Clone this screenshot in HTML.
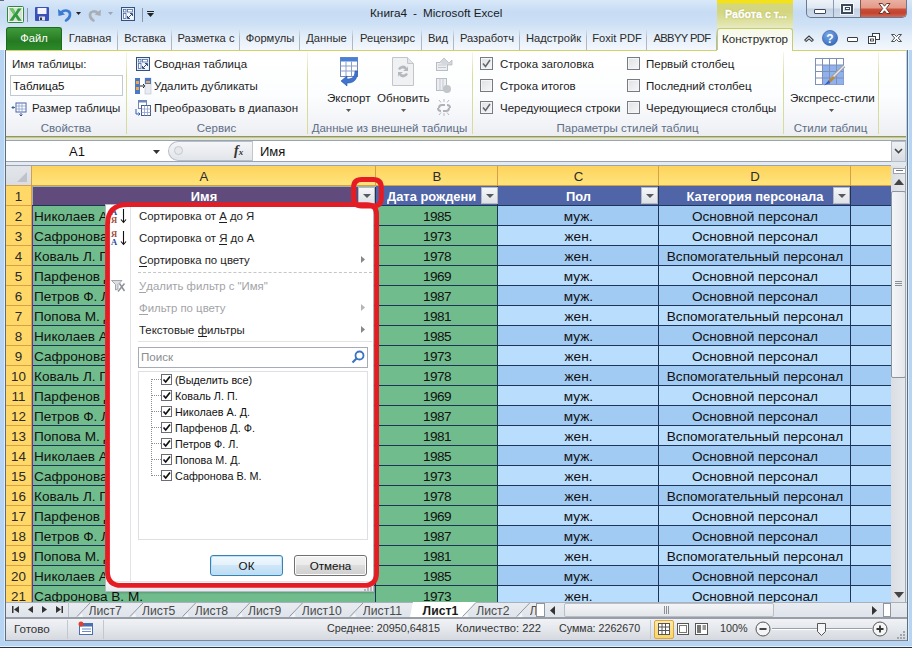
<!DOCTYPE html><html><head><meta charset="utf-8"><style>
*{margin:0;padding:0;box-sizing:border-box}
html,body{width:912px;height:648px;overflow:hidden}
body{position:relative;background:#b8d4f3;font-family:"Liberation Sans",sans-serif;font-size:12px;color:#1e1e1e}
.a{position:absolute}
.t{position:absolute;white-space:nowrap;line-height:1}
svg{position:absolute;overflow:visible}
u{text-decoration:none;border-bottom:1px solid currentColor;display:inline-block;line-height:0.95}
</style></head><body><div class="a" style="left:0px;top:0px;width:912px;height:50px;background:linear-gradient(180deg,#d8e8f8 0px,#c6dcf4 12px,#cde0f5 24px,#e2edf9 36px,#f4f8fc 50px)"></div><div class="a" style="left:0px;top:0px;width:4px;height:1px;background:#5a6a80"></div><svg style="left:7px;top:6px" width="17" height="17" viewBox="0 0 17 17"><rect x="0.5" y="0.5" width="16" height="16" rx="1" fill="#f2f5f1" stroke="#2d8a3a"/><rect x="2" y="2" width="13" height="13" fill="#d8e3d6"/><path d="M2.5 2.5h3.6l2.4 4 2.4-4h3.6l-4.2 6 4.4 6.2h-3.7l-2.5-4-2.5 4H2.3l4.4-6.2z" fill="#2e9b3c"/><path d="M2.5 2.5h3.6l2.4 4-1.8 2.2z" fill="#6cc66a"/></svg><div class="a" style="left:27px;top:8px;width:1px;height:14px;background:#8a97a8"></div><svg style="left:35px;top:7px" width="14" height="14" viewBox="0 0 14 14"><rect x="0" y="0" width="14" height="14" rx="1" fill="#3b52b8"/><rect x="2.5" y="1" width="9" height="6" fill="#f4f6fb"/><rect x="4" y="9.5" width="6" height="4" fill="#dfe3ee"/><rect x="5" y="10.5" width="2" height="2.5" fill="#333"/></svg><svg style="left:57px;top:6px" width="15" height="15" viewBox="0 0 15 15"><path d="M1 3 L1.5 10 L8 8.5 Z" fill="#3b7ad0"/><path d="M4 6.5 C8 3 13.5 4.5 13 9 C12.7 12 10.5 13.5 9 14.5" fill="none" stroke="#3b7ad0" stroke-width="2.6" stroke-linecap="round"/></svg><svg style="left:76px;top:12px" width="5" height="3" viewBox="0 0 5 3"><path d="M0 0h5l-2.5 3z" fill="#222"/></svg><svg style="left:88px;top:7px" width="14" height="14" viewBox="0 0 14 14"><path d="M13 2.5 L12.5 9 L6.5 7.5 Z" fill="#a9aeb5"/><path d="M10 6 C6.5 3 1.5 4.5 2 8.5 C2.3 11.5 4 12.5 5.5 13.5" fill="none" stroke="#a9aeb5" stroke-width="2.6" stroke-linecap="round"/></svg><svg style="left:108px;top:12px" width="5" height="3" viewBox="0 0 5 3"><path d="M0 0h5l-2.5 3z" fill="#9aa6b8"/></svg><svg style="left:121px;top:7px" width="14" height="14" viewBox="0 0 14 14"><rect x="0.5" y="0.5" width="13" height="13" fill="#dfe6f1" stroke="#34507e"/><rect x="1.5" y="1.5" width="11" height="11" fill="#f3f6fa"/><rect x="2.5" y="2.5" width="2.5" height="2.5" fill="#fff" stroke="#4a6aa8" stroke-width="0.8"/><rect x="6.5" y="2.5" width="5" height="2.5" fill="#fff" stroke="#4a6aa8" stroke-width="0.8"/><rect x="2.5" y="6.5" width="2.5" height="5" fill="#fff" stroke="#4a6aa8" stroke-width="0.8"/><path d="M7 11 L11 7" stroke="#34507e" stroke-width="1"/><path d="M6.5 9 L6.5 11.5 L9 11.5" fill="none" stroke="#34507e"/><path d="M9 6.5 L11.5 6.5 L11.5 9" fill="none" stroke="#34507e"/></svg><div class="a" style="left:142px;top:8px;width:1px;height:14px;background:#8a97a8"></div><div class="a" style="left:147px;top:11px;width:7px;height:1px;background:#222"></div><svg style="left:147px;top:13px" width="7" height="4" viewBox="0 0 7 4"><path d="M0 0h7l-3.5 4z" fill="#222"/></svg><div class="t" style="left:370px;top:8px;font-size:11.8px;color:#1b1b1b;">Книга4</div><div class="t" style="left:413px;top:8px;font-size:11.8px;color:#1b1b1b;">-</div><div class="t" style="left:423px;top:7px;font-size:11.7px;color:#1b1b1b;">Microsoft Excel</div><div class="a" style="left:717px;top:0px;width:76px;height:28px;background:linear-gradient(#f3e21a 0px,#f3e21a 3px,#d5d77e 4px,#d3d67e 12px,#dfe2a4 22px,#e8ebc0 28px)"></div><div class="t" style="left:725px;top:9px;font-size:10.7px;color:#ffffff;font-weight:bold;-webkit-text-stroke:0.3px #fff;text-shadow:0 0 2px #9a9e40">Работа с т...</div><div class="a" style="left:806px;top:0;width:101px;height:18px;border:1px solid #6a7a90;border-top:none;border-radius:0 0 5px 5px;overflow:hidden;background:linear-gradient(#eef3f9 0px,#dfe7f1 8px,#c4d2e4 9px,#cfdcec 17px)"><div class="a" style="left:26px;top:0;width:1px;height:17px;background:#8a9ab0"></div><div class="a" style="left:53px;top:0;width:1px;height:17px;background:#8a5a50"></div><div class="a" style="left:54px;top:0;width:47px;height:17px;background:linear-gradient(#eab0a2 0px,#e39a88 8px,#c9503a 9px,#c2432e 13px,#d06a55 17px)"></div></div><div class="a" style="left:814px;top:9px;width:12px;height:5px;background:#fff;border:1px solid #3c4a5c;border-radius:1px"></div><div class="a" style="left:841px;top:4px;width:12px;height:10px;background:transparent;border:2px solid #3c4a5c;box-shadow:inset 0 0 0 1px #fff, 0 0 0 1px rgba(255,255,255,0.7)"></div><div class="a" style="left:845px;top:7px;width:5px;height:3px;background:#fff;border:1px solid #3c4a5c"></div><svg style="left:878px;top:3px" width="13" height="11" viewBox="0 0 13 11"><path d="M1 0.5h3.4L6.5 3.2 8.6 0.5H12L8.3 5.5 12 10.5H8.6L6.5 7.8 4.4 10.5H1L4.7 5.5z" fill="#fff" stroke="#5a2a20" stroke-width="0.9"/></svg><div class="a" style="left:6px;top:27px;width:56px;height:23px;background:linear-gradient(#3f9c3b,#267a22 60%,#2d8b28);border:1px solid #1e6a1c;border-bottom:none;border-radius:3px 3px 0 0"></div><div class="t" style="left:6px;top:33px;width:56px;text-align:center;font-size:11.2px;color:#fff">Файл</div><div class="t" style="left:62px;top:33px;width:56px;text-align:center;font-size:11.2px;color:#2b2b2b">Главная</div><div class="a" style="left:117px;top:29px;width:1px;height:21px;background:linear-gradient(rgba(160,170,185,0),#b0b8c4 40%,#b0b8c4)"></div><div class="t" style="left:118px;top:33px;width:54px;text-align:center;font-size:11.2px;color:#2b2b2b">Вставка</div><div class="a" style="left:171px;top:29px;width:1px;height:21px;background:linear-gradient(rgba(160,170,185,0),#b0b8c4 40%,#b0b8c4)"></div><div class="t" style="left:172px;top:33px;width:68px;text-align:center;font-size:11.2px;color:#2b2b2b">Разметка с</div><div class="a" style="left:239px;top:29px;width:1px;height:21px;background:linear-gradient(rgba(160,170,185,0),#b0b8c4 40%,#b0b8c4)"></div><div class="t" style="left:240px;top:33px;width:60px;text-align:center;font-size:11.2px;color:#2b2b2b">Формулы</div><div class="a" style="left:299px;top:29px;width:1px;height:21px;background:linear-gradient(rgba(160,170,185,0),#b0b8c4 40%,#b0b8c4)"></div><div class="t" style="left:300px;top:33px;width:53px;text-align:center;font-size:11.2px;color:#2b2b2b">Данные</div><div class="a" style="left:352px;top:29px;width:1px;height:21px;background:linear-gradient(rgba(160,170,185,0),#b0b8c4 40%,#b0b8c4)"></div><div class="t" style="left:353px;top:33px;width:69px;text-align:center;font-size:11.2px;color:#2b2b2b">Рецензирс</div><div class="a" style="left:421px;top:29px;width:1px;height:21px;background:linear-gradient(rgba(160,170,185,0),#b0b8c4 40%,#b0b8c4)"></div><div class="t" style="left:422px;top:33px;width:32px;text-align:center;font-size:11.2px;color:#2b2b2b">Вид</div><div class="a" style="left:453px;top:29px;width:1px;height:21px;background:linear-gradient(rgba(160,170,185,0),#b0b8c4 40%,#b0b8c4)"></div><div class="t" style="left:454px;top:33px;width:66px;text-align:center;font-size:11.2px;color:#2b2b2b">Разработч</div><div class="a" style="left:519px;top:29px;width:1px;height:21px;background:linear-gradient(rgba(160,170,185,0),#b0b8c4 40%,#b0b8c4)"></div><div class="t" style="left:520px;top:33px;width:67px;text-align:center;font-size:11.2px;color:#2b2b2b">Надстройк</div><div class="a" style="left:586px;top:29px;width:1px;height:21px;background:linear-gradient(rgba(160,170,185,0),#b0b8c4 40%,#b0b8c4)"></div><div class="t" style="left:587px;top:33px;width:60px;text-align:center;font-size:11.2px;color:#2b2b2b">Foxit PDF</div><div class="a" style="left:646px;top:29px;width:1px;height:21px;background:linear-gradient(rgba(160,170,185,0),#b0b8c4 40%,#b0b8c4)"></div><div class="t" style="left:647px;top:33px;width:70px;text-align:center;font-size:11.2px;letter-spacing:-0.6px;color:#2b2b2b">ABBYY PDF</div><div class="a" style="left:716px;top:29px;width:1px;height:21px;background:linear-gradient(rgba(160,170,185,0),#b0b8c4 40%,#b0b8c4)"></div><div class="a" style="left:717px;top:28px;width:76px;height:23px;background:linear-gradient(#f6f8e8,#ffffff);border:1px solid #c8cc6a;border-bottom:none;border-radius:3px 3px 0 0"></div><div class="t" style="left:717px;top:33px;font-size:11.6px;color:#2b2b2b;"><div style="width:76px;text-align:center">Конструктор</div></div><svg style="left:804px;top:35px" width="10" height="7" viewBox="0 0 10 7"><path d="M0.8 5 L5 1 L9.2 5 L7.8 6.4 L5 3.8 L2.2 6.4 Z" fill="#fff" stroke="#3a3f46" stroke-width="1.1" stroke-linejoin="round"/></svg><svg style="left:822px;top:30px" width="16" height="16" viewBox="0 0 16 16"><defs><radialGradient id="hg" cx="0.4" cy="0.3" r="0.8"><stop offset="0" stop-color="#7aa8e8"/><stop offset="1" stop-color="#2f64b8"/></radialGradient></defs><circle cx="8" cy="8" r="7.6" fill="url(#hg)" stroke="#2d5aa0" stroke-width="0.6"/><text x="8" y="12.6" font-family="Liberation Sans" font-weight="bold" font-size="12" text-anchor="middle" fill="#fff">?</text></svg><div class="a" style="left:847px;top:37px;width:11px;height:5px;background:#fff;border:1px solid #3a3f46;border-radius:1px"></div><svg style="left:868px;top:33px" width="12" height="11" viewBox="0 0 12 11"><rect x="4.5" y="0.5" width="7" height="6" fill="#fff" stroke="#3a3f46"/><rect x="0.5" y="3.5" width="7" height="7" fill="#fff" stroke="#3a3f46"/><rect x="2.5" y="6" width="3" height="2" fill="none" stroke="#3a3f46" stroke-width="0.9"/></svg><svg style="left:891px;top:34px" width="11" height="8" viewBox="0 0 11 8"><path d="M0.5 0.5h3L5.5 2.6 7.5 0.5h3L7.3 4 10.5 7.5h-3L5.5 5.4 3.5 7.5h-3L3.7 4z" fill="#fff" stroke="#3a3f46" stroke-width="0.9" stroke-linejoin="round"/></svg><div class="a" style="left:6px;top:50px;width:900px;height:86px;background:linear-gradient(#ffffff 0px,#fcfdfe 45px,#f3f5f8 70px,#eceef2 86px)"></div><div class="a" style="left:6px;top:50px;width:711px;height:1px;background:#cfd36a"></div><div class="a" style="left:792px;top:50px;width:114px;height:1px;background:#cfd36a"></div><div class="a" style="left:126px;top:52px;width:1px;height:82px;background:linear-gradient(rgba(210,214,140,0.2),#d8dc9a 30%,#d8dc9a)"></div><div class="a" style="left:307px;top:52px;width:1px;height:82px;background:linear-gradient(rgba(210,214,140,0.2),#d8dc9a 30%,#d8dc9a)"></div><div class="a" style="left:472px;top:52px;width:1px;height:82px;background:linear-gradient(rgba(210,214,140,0.2),#d8dc9a 30%,#d8dc9a)"></div><div class="a" style="left:783px;top:52px;width:1px;height:82px;background:linear-gradient(rgba(210,214,140,0.2),#d8dc9a 30%,#d8dc9a)"></div><div class="a" style="left:878px;top:52px;width:1px;height:82px;background:linear-gradient(rgba(210,214,140,0.2),#d8dc9a 30%,#d8dc9a)"></div><div class="t" style="left:6px;top:123px;width:120px;text-align:center;font-size:11.5px;color:#5e6e86">Свойства</div><div class="t" style="left:126px;top:123px;width:181px;text-align:center;font-size:11.5px;color:#5e6e86">Сервис</div><div class="t" style="left:307px;top:123px;width:165px;text-align:center;font-size:11.5px;color:#5e6e86">Данные из внешней таблицы</div><div class="t" style="left:472px;top:123px;width:311px;text-align:center;font-size:11.5px;color:#5e6e86">Параметры стилей таблиц</div><div class="t" style="left:783px;top:123px;width:95px;text-align:center;font-size:11.5px;color:#5e6e86">Стили таблиц</div><div class="t" style="left:12px;top:59px;font-size:11.5px;color:#1e1e1e;">Имя таблицы:</div><div class="a" style="left:10px;top:75px;width:113px;height:21px;background:#fff;border:1px solid #c3c9d2"></div><div class="t" style="left:13px;top:81px;font-size:11.5px;color:#111;">Таблица5</div><svg style="left:12px;top:100px" width="17" height="16" viewBox="0 0 17 16"><rect x="4" y="3" width="10" height="9" fill="#fff" stroke="#4a66a8"/><path d="M4 6h10M4 9h10M7 3v9M10 3v9" stroke="#8aa0cc" stroke-width="0.8"/><path d="M0 7.5h3M1.5 6l-1.5 1.5 1.5 1.5M9 13v3M7.5 14.5l1.5 1.5 1.5-1.5" stroke="#2e4a90" fill="none" stroke-width="0.9"/></svg><div class="t" style="left:32px;top:103px;font-size:11.5px;color:#1e1e1e;">Размер таблицы</div><svg style="left:136px;top:57px" width="14" height="14" viewBox="0 0 14 14"><rect x="0.5" y="0.5" width="13" height="13" fill="#dfe6f1" stroke="#34507e"/><rect x="1.5" y="1.5" width="11" height="11" fill="#f3f6fa"/><rect x="2.5" y="2.5" width="2.5" height="2.5" fill="#fff" stroke="#4a6aa8" stroke-width="0.8"/><rect x="6.5" y="2.5" width="5" height="2.5" fill="#fff" stroke="#4a6aa8" stroke-width="0.8"/><rect x="2.5" y="6.5" width="2.5" height="5" fill="#fff" stroke="#4a6aa8" stroke-width="0.8"/><path d="M7 11 L11 7" stroke="#34507e" stroke-width="1"/><path d="M6.5 9 L6.5 11.5 L9 11.5" fill="none" stroke="#34507e"/><path d="M9 6.5 L11.5 6.5 L11.5 9" fill="none" stroke="#34507e"/></svg><div class="t" style="left:154px;top:59px;font-size:11.5px;color:#1e1e1e;">Сводная таблица</div><svg style="left:135px;top:78px" width="16" height="16" viewBox="0 0 16 16"><rect x="0" y="0" width="5" height="16" fill="#4a78c8"/><rect x="1" y="3" width="3" height="3" fill="#f2a640"/><rect x="1" y="9" width="3" height="3" fill="#f2a640"/><path d="M5 8h5M8 6l2 2-2 2" stroke="#222" fill="none"/><rect x="10" y="0" width="6" height="16" fill="#e8ecf2" stroke="#b8c0cc" stroke-width="0.6"/><rect x="10" y="0" width="6" height="6" fill="#4a78c8"/><rect x="11" y="3" width="4" height="2" fill="#f2a640"/></svg><div class="t" style="left:154px;top:81px;font-size:11.5px;color:#1e1e1e;">Удалить дубликаты</div><svg style="left:135px;top:100px" width="16" height="16" viewBox="0 0 16 16"><rect x="3.5" y="0.5" width="8" height="8" fill="#fff" stroke="#6f86b8"/><rect x="3.5" y="0.5" width="8" height="2" fill="#6f86b8"/><rect x="6.5" y="5.5" width="9" height="10" fill="#fff" stroke="#4a5e8c"/><path d="M6.5 9h9M6.5 12.5h9M9.5 5.5v10M12.5 5.5v10" stroke="#8aa0cc" stroke-width="0.8"/><path d="M1 9v5h4M3.5 12.5l1.5 1.5-1.5 1.5" stroke="#2e5bb8" fill="none"/></svg><div class="t" style="left:154px;top:103px;font-size:11.5px;color:#1e1e1e;">Преобразовать в диапазон</div><svg style="left:339px;top:57px" width="20" height="29" viewBox="0 0 20 29"><rect x="1.5" y="0.5" width="17" height="19" fill="#fff" stroke="#6f86b8"/><rect x="1.5" y="0.5" width="17" height="4" fill="#4a7fd6"/><path d="M1.5 9h17M1.5 14h17M7 4.5v15M12.5 4.5v15" stroke="#8aa0cc"/><path d="M16 14 C16 21 12 22 8 22 L8 19 L2 24 L8 29 L8 26 C14 26 18.5 24 18.5 14 Z" fill="#3f74d0" stroke="#2b56a8" stroke-width="0.6"/></svg><div class="t" style="left:327px;top:92px;font-size:11.6px;color:#1e1e1e;">Экспорт</div><svg style="left:346px;top:109px" width="5" height="3" viewBox="0 0 5 3"><path d="M0 0h5l-2.5 3z" fill="#555"/></svg><svg style="left:392px;top:57px" width="22" height="29" viewBox="0 0 22 29"><path d="M0.5 0.5h15l6 6v22h-21z" fill="#f0f1f3" stroke="#c2c6cc"/><path d="M15.5 0.5v6h6" fill="#e2e4e8" stroke="#c2c6cc"/><path d="M6 12a5 5 0 0 1 9 -1l1-2v5h-5l2-1.5a3 3 0 0 0-5 .5zM16 17a5 5 0 0 1 -9 1l-1 2v-5h5l-2 1.5a3 3 0 0 0 5-.5z" fill="#b4b8be"/></svg><div class="t" style="left:377px;top:92px;font-size:11.6px;color:#1e1e1e;">Обновить</div><svg style="left:401px;top:109px" width="5" height="3" viewBox="0 0 5 3"><path d="M0 0h5l-2.5 3z" fill="#555"/></svg><svg style="left:436px;top:57px" width="16" height="14" viewBox="0 0 16 14"><rect x="0.5" y="5.5" width="11" height="8" fill="#eceef1" stroke="#b8bcc3"/><path d="M2 8h8M2 10.5h8" stroke="#c5c9cf"/><path d="M3 6 L8 1 L13 6 L16 3 L16 8 L11 8" fill="#d4d7dc" stroke="#b0b4bb" stroke-width="0.7"/></svg><svg style="left:436px;top:78px" width="16" height="16" viewBox="0 0 16 16"><rect x="0.5" y="0.5" width="10" height="12" fill="#eceef1" stroke="#b8bcc3"/><path d="M4 0.5v12M7 0.5v12" stroke="#c5c9cf"/><circle cx="11" cy="11" r="4" fill="#c2c5ca"/></svg><svg style="left:436px;top:99px" width="16" height="17" viewBox="0 0 16 17"><path d="M3 9a3 3 0 0 1 3-3h3M13 9a3 3 0 0 1-3 3h-3M5 12a3 3 0 0 1-3-3M11 6a3 3 0 0 1 3 3" stroke="#aeb2b8" stroke-width="2" fill="none"/><path d="M8 0v3M3 1l2 2.5M13 1l-2 2.5M8 14v3M3 16l2-2.5M13 16l-2-2.5" stroke="#b8bcc2"/></svg><div class="a" style="left:480px;top:57px;width:13px;height:13px;background:linear-gradient(135deg,#dfe1e4,#f6f7f8);border:1px solid #777c83;box-shadow:inset 0 0 0 1px #f4f5f6"></div><svg style="left:482px;top:59px" width="9" height="9" viewBox="0 0 9 9"><path d="M1 4.5 L3.5 7.5 L8 1" fill="none" stroke="#62676e" stroke-width="1.5"/></svg><div class="a" style="left:480px;top:79px;width:13px;height:13px;background:linear-gradient(135deg,#dfe1e4,#f6f7f8);border:1px solid #777c83;box-shadow:inset 0 0 0 1px #f4f5f6"></div><div class="a" style="left:480px;top:101px;width:13px;height:13px;background:linear-gradient(135deg,#dfe1e4,#f6f7f8);border:1px solid #777c83;box-shadow:inset 0 0 0 1px #f4f5f6"></div><svg style="left:482px;top:103px" width="9" height="9" viewBox="0 0 9 9"><path d="M1 4.5 L3.5 7.5 L8 1" fill="none" stroke="#62676e" stroke-width="1.5"/></svg><div class="a" style="left:627px;top:57px;width:13px;height:13px;background:linear-gradient(135deg,#dfe1e4,#f6f7f8);border:1px solid #777c83;box-shadow:inset 0 0 0 1px #f4f5f6"></div><div class="a" style="left:627px;top:79px;width:13px;height:13px;background:linear-gradient(135deg,#dfe1e4,#f6f7f8);border:1px solid #777c83;box-shadow:inset 0 0 0 1px #f4f5f6"></div><div class="a" style="left:627px;top:101px;width:13px;height:13px;background:linear-gradient(135deg,#dfe1e4,#f6f7f8);border:1px solid #777c83;box-shadow:inset 0 0 0 1px #f4f5f6"></div><div class="t" style="left:500px;top:59px;font-size:11.5px;color:#1e1e1e;">Строка заголовка</div><div class="t" style="left:500px;top:81px;font-size:11.5px;color:#1e1e1e;">Строка итогов</div><div class="t" style="left:500px;top:103px;font-size:11.5px;color:#1e1e1e;">Чередующиеся строки</div><div class="t" style="left:646px;top:59px;font-size:11.5px;color:#1e1e1e;">Первый столбец</div><div class="t" style="left:646px;top:81px;font-size:11.5px;color:#1e1e1e;">Последний столбец</div><div class="t" style="left:646px;top:103px;font-size:11.5px;color:#1e1e1e;">Чередующиеся столбцы</div><svg style="left:815px;top:58px" width="30" height="28" viewBox="0 0 30 28"><g stroke="#7c8fb6" stroke-width="1"><rect x="0.5" y="0.5" width="28" height="26" fill="#fff"/></g><rect x="7.5" y="7" width="21" height="19.5" fill="#8fb1ee"/><path d="M0.5 7h28M0.5 13.5h28M0.5 20h28M7.5 0.5v26M14.5 0.5v26M21.5 0.5v26" stroke="#7c8fb6"/><path d="M29 8 L17 20" stroke="#9aa0a8" stroke-width="3.5"/><path d="M29 8 L17 20" stroke="#e6e8ec" stroke-width="1.5"/><path d="M18 18 L14 22 L11 27 L16 24 L20 20z" fill="#b88a40"/><path d="M14 22 L9 27.5 L15 25z" fill="#2f5fd0"/></svg><div class="t" style="left:790px;top:92px;font-size:11.6px;color:#1e1e1e;">Экспресс-стили</div><svg style="left:829px;top:109px" width="5" height="3" viewBox="0 0 5 3"><path d="M0 0h5l-2.5 3z" fill="#555"/></svg><div class="a" style="left:6px;top:136px;width:900px;height:30px;background:#e3e8ef"></div><div class="a" style="left:6px;top:136px;width:900px;height:1px;background:#8e947c"></div><div class="a" style="left:6px;top:137px;width:900px;height:1px;background:#c9c97c"></div><div class="a" style="left:6px;top:138px;width:900px;height:2px;background:#e3e6cf"></div><div class="a" style="left:6px;top:140px;width:900px;height:1px;background:#9aa3b0"></div><div class="a" style="left:6px;top:141px;width:900px;height:20px;background:#fff"></div><div class="a" style="left:6px;top:161px;width:900px;height:1px;background:#9aa3b0"></div><div class="a" style="left:6px;top:162px;width:885px;height:3px;background:#e6ebf3"></div><div class="a" style="left:6px;top:165px;width:885px;height:1px;background:#9aa3b0"></div><div class="t" style="left:6px;top:145px;font-size:13px;color:#111;"><div style="width:142px;text-align:center">A1</div></div><svg style="left:153px;top:150px" width="7" height="4" viewBox="0 0 7 4"><path d="M0 0h7l-3.5 4z" fill="#333"/></svg><div class="a" style="left:168px;top:141px;width:84px;height:20px;border-radius:10px 0 0 10px;background:linear-gradient(#f4f5f7,#e2e5ea);border:1px solid #b8bec8;border-right:none"></div><svg style="left:174px;top:146px" width="9" height="9" viewBox="0 0 9 9"><circle cx="4.5" cy="4.5" r="4" fill="#e6e8ec" stroke="#c4c8ce"/></svg><div class="t" style="left:234px;top:143px;font-size:14px;color:#333;"><i style="font-family:Liberation Serif;font-weight:bold">f</i><span style="font-size:9px;font-family:Liberation Serif;font-style:italic;font-weight:bold">x</span></div><div class="a" style="left:252px;top:141px;width:1px;height:20px;background:#c0c6cf"></div><div class="t" style="left:260px;top:145px;font-size:13px;color:#111;">Имя</div><div class="a" style="left:891px;top:141px;width:15px;height:21px;background:linear-gradient(#eef0f3,#d9dde3);border:1px solid #b5bcc6"></div><svg style="left:894px;top:148px" width="9" height="6" viewBox="0 0 9 6"><path d="M1 1 L4.5 4.5 L8 1" fill="none" stroke="#444" stroke-width="1.6"/></svg><div class="a" style="left:6px;top:166px;width:885px;height:20px;background:linear-gradient(#fdd35c,#ffe57e)"></div><div class="a" style="left:6px;top:166px;width:25px;height:20px;background:linear-gradient(#e2e5e9,#d9dde3)"></div><svg style="left:17px;top:172px" width="10" height="10" viewBox="0 0 10 10"><path d="M10 0 L10 10 L0 10z" fill="#bfc3c9"/></svg><div class="a" style="left:31px;top:166px;width:1px;height:20px;background:#d6a046"></div><div class="a" style="left:375px;top:166px;width:1px;height:20px;background:#d6a046"></div><div class="t" style="left:32px;top:170px;width:344px;text-align:center;font-size:13.2px;color:#2a2a2a">A</div><div class="a" style="left:497px;top:166px;width:1px;height:20px;background:#d6a046"></div><div class="t" style="left:376px;top:170px;width:122px;text-align:center;font-size:13.2px;color:#2a2a2a">B</div><div class="a" style="left:658px;top:166px;width:1px;height:20px;background:#d6a046"></div><div class="t" style="left:498px;top:170px;width:161px;text-align:center;font-size:13.2px;color:#2a2a2a">C</div><div class="a" style="left:850px;top:166px;width:1px;height:20px;background:#d6a046"></div><div class="t" style="left:659px;top:170px;width:192px;text-align:center;font-size:13.2px;color:#2a2a2a">D</div><div class="a" style="left:6px;top:185px;width:885px;height:1px;background:#d6a046"></div><div class="a" style="left:6px;top:186px;width:26px;height:20px;background:#ffd868;border-bottom:1px solid #d6a046;border-right:1px solid #d6a046"></div><div class="t" style="left:6px;top:190px;width:25px;text-align:center;font-size:13.4px;color:#2a2a2a">1</div><div class="a" style="left:32px;top:186px;width:344px;height:20px;background:#614a7c"></div><div class="a" style="left:376px;top:186px;width:515px;height:20px;background:#5065a8"></div><div class="t" style="left:32px;top:191px;width:344px;text-align:center;font-size:12.9px;font-weight:bold;color:#fff">Имя</div><div class="t" style="left:387px;top:191px;width:94px;overflow:hidden;font-size:12.9px;font-weight:bold;color:#fff">Дата рождени</div><div class="t" style="left:498px;top:191px;width:161px;text-align:center;font-size:12.9px;font-weight:bold;color:#fff">Пол</div><div class="t" style="left:659px;top:191px;width:192px;text-align:center;font-size:12.9px;font-weight:bold;color:#fff">Категория персонала</div><div class="a" style="left:32px;top:205px;width:859px;height:1px;background:#1b3458"></div><div class="a" style="left:6px;top:206px;width:26px;height:20px;background:#ffd868;border-bottom:1px solid #d6a046;border-right:1px solid #d6a046"></div><div class="t" style="left:6px;top:210px;width:25px;text-align:center;font-size:13.4px;color:#2a2a2a">2</div><div class="a" style="left:32px;top:206px;width:466px;height:20px;background:#71bc8d"></div><div class="a" style="left:498px;top:206px;width:393px;height:20px;background:#a1cbf3"></div><div class="t" style="left:34px;top:210px;font-size:13.6px;color:#111">Николаев А. Д.</div><div class="t" style="left:376px;top:210px;width:122px;text-align:center;font-size:13.6px;letter-spacing:-0.5px;color:#111">1985</div><div class="t" style="left:498px;top:210px;width:161px;text-align:center;font-size:13.6px;color:#111">муж.</div><div class="t" style="left:659px;top:210px;width:192px;text-align:center;font-size:13.6px;color:#111">Основной персонал</div><div class="a" style="left:32px;top:225px;width:859px;height:1px;background:#1b3458"></div><div class="a" style="left:6px;top:226px;width:26px;height:20px;background:#ffd868;border-bottom:1px solid #d6a046;border-right:1px solid #d6a046"></div><div class="t" style="left:6px;top:230px;width:25px;text-align:center;font-size:13.4px;color:#2a2a2a">3</div><div class="a" style="left:32px;top:226px;width:466px;height:20px;background:#71bc8d"></div><div class="a" style="left:498px;top:226px;width:393px;height:20px;background:#b8ddfd"></div><div class="t" style="left:34px;top:230px;font-size:13.6px;color:#111">Сафронова В. М.</div><div class="t" style="left:376px;top:230px;width:122px;text-align:center;font-size:13.6px;letter-spacing:-0.5px;color:#111">1973</div><div class="t" style="left:498px;top:230px;width:161px;text-align:center;font-size:13.6px;color:#111">жен.</div><div class="t" style="left:659px;top:230px;width:192px;text-align:center;font-size:13.6px;color:#111">Основной персонал</div><div class="a" style="left:32px;top:245px;width:859px;height:1px;background:#1b3458"></div><div class="a" style="left:6px;top:246px;width:26px;height:20px;background:#ffd868;border-bottom:1px solid #d6a046;border-right:1px solid #d6a046"></div><div class="t" style="left:6px;top:250px;width:25px;text-align:center;font-size:13.4px;color:#2a2a2a">4</div><div class="a" style="left:32px;top:246px;width:466px;height:20px;background:#71bc8d"></div><div class="a" style="left:498px;top:246px;width:393px;height:20px;background:#a1cbf3"></div><div class="t" style="left:34px;top:250px;font-size:13.6px;color:#111">Коваль Л. П.</div><div class="t" style="left:376px;top:250px;width:122px;text-align:center;font-size:13.6px;letter-spacing:-0.5px;color:#111">1978</div><div class="t" style="left:498px;top:250px;width:161px;text-align:center;font-size:13.6px;color:#111">жен.</div><div class="t" style="left:659px;top:250px;width:192px;text-align:center;font-size:13.6px;color:#111">Вспомогательный персонал</div><div class="a" style="left:32px;top:265px;width:859px;height:1px;background:#1b3458"></div><div class="a" style="left:6px;top:266px;width:26px;height:20px;background:#ffd868;border-bottom:1px solid #d6a046;border-right:1px solid #d6a046"></div><div class="t" style="left:6px;top:270px;width:25px;text-align:center;font-size:13.4px;color:#2a2a2a">5</div><div class="a" style="left:32px;top:266px;width:466px;height:20px;background:#71bc8d"></div><div class="a" style="left:498px;top:266px;width:393px;height:20px;background:#b8ddfd"></div><div class="t" style="left:34px;top:270px;font-size:13.6px;color:#111">Парфенов Д. Ф.</div><div class="t" style="left:376px;top:270px;width:122px;text-align:center;font-size:13.6px;letter-spacing:-0.5px;color:#111">1969</div><div class="t" style="left:498px;top:270px;width:161px;text-align:center;font-size:13.6px;color:#111">муж.</div><div class="t" style="left:659px;top:270px;width:192px;text-align:center;font-size:13.6px;color:#111">Основной персонал</div><div class="a" style="left:32px;top:285px;width:859px;height:1px;background:#1b3458"></div><div class="a" style="left:6px;top:286px;width:26px;height:20px;background:#ffd868;border-bottom:1px solid #d6a046;border-right:1px solid #d6a046"></div><div class="t" style="left:6px;top:290px;width:25px;text-align:center;font-size:13.4px;color:#2a2a2a">6</div><div class="a" style="left:32px;top:286px;width:466px;height:20px;background:#71bc8d"></div><div class="a" style="left:498px;top:286px;width:393px;height:20px;background:#a1cbf3"></div><div class="t" style="left:34px;top:290px;font-size:13.6px;color:#111">Петров Ф. Л.</div><div class="t" style="left:376px;top:290px;width:122px;text-align:center;font-size:13.6px;letter-spacing:-0.5px;color:#111">1987</div><div class="t" style="left:498px;top:290px;width:161px;text-align:center;font-size:13.6px;color:#111">муж.</div><div class="t" style="left:659px;top:290px;width:192px;text-align:center;font-size:13.6px;color:#111">Основной персонал</div><div class="a" style="left:32px;top:305px;width:859px;height:1px;background:#1b3458"></div><div class="a" style="left:6px;top:306px;width:26px;height:20px;background:#ffd868;border-bottom:1px solid #d6a046;border-right:1px solid #d6a046"></div><div class="t" style="left:6px;top:310px;width:25px;text-align:center;font-size:13.4px;color:#2a2a2a">7</div><div class="a" style="left:32px;top:306px;width:466px;height:20px;background:#71bc8d"></div><div class="a" style="left:498px;top:306px;width:393px;height:20px;background:#b8ddfd"></div><div class="t" style="left:34px;top:310px;font-size:13.6px;color:#111">Попова М. Д.</div><div class="t" style="left:376px;top:310px;width:122px;text-align:center;font-size:13.6px;letter-spacing:-0.5px;color:#111">1981</div><div class="t" style="left:498px;top:310px;width:161px;text-align:center;font-size:13.6px;color:#111">жен.</div><div class="t" style="left:659px;top:310px;width:192px;text-align:center;font-size:13.6px;color:#111">Вспомогательный персонал</div><div class="a" style="left:32px;top:325px;width:859px;height:1px;background:#1b3458"></div><div class="a" style="left:6px;top:326px;width:26px;height:20px;background:#ffd868;border-bottom:1px solid #d6a046;border-right:1px solid #d6a046"></div><div class="t" style="left:6px;top:330px;width:25px;text-align:center;font-size:13.4px;color:#2a2a2a">8</div><div class="a" style="left:32px;top:326px;width:466px;height:20px;background:#71bc8d"></div><div class="a" style="left:498px;top:326px;width:393px;height:20px;background:#a1cbf3"></div><div class="t" style="left:34px;top:330px;font-size:13.6px;color:#111">Николаев А. Д.</div><div class="t" style="left:376px;top:330px;width:122px;text-align:center;font-size:13.6px;letter-spacing:-0.5px;color:#111">1985</div><div class="t" style="left:498px;top:330px;width:161px;text-align:center;font-size:13.6px;color:#111">муж.</div><div class="t" style="left:659px;top:330px;width:192px;text-align:center;font-size:13.6px;color:#111">Основной персонал</div><div class="a" style="left:32px;top:345px;width:859px;height:1px;background:#1b3458"></div><div class="a" style="left:6px;top:346px;width:26px;height:20px;background:#ffd868;border-bottom:1px solid #d6a046;border-right:1px solid #d6a046"></div><div class="t" style="left:6px;top:350px;width:25px;text-align:center;font-size:13.4px;color:#2a2a2a">9</div><div class="a" style="left:32px;top:346px;width:466px;height:20px;background:#71bc8d"></div><div class="a" style="left:498px;top:346px;width:393px;height:20px;background:#b8ddfd"></div><div class="t" style="left:34px;top:350px;font-size:13.6px;color:#111">Сафронова В. М.</div><div class="t" style="left:376px;top:350px;width:122px;text-align:center;font-size:13.6px;letter-spacing:-0.5px;color:#111">1973</div><div class="t" style="left:498px;top:350px;width:161px;text-align:center;font-size:13.6px;color:#111">жен.</div><div class="t" style="left:659px;top:350px;width:192px;text-align:center;font-size:13.6px;color:#111">Основной персонал</div><div class="a" style="left:32px;top:365px;width:859px;height:1px;background:#1b3458"></div><div class="a" style="left:6px;top:366px;width:26px;height:20px;background:#ffd868;border-bottom:1px solid #d6a046;border-right:1px solid #d6a046"></div><div class="t" style="left:6px;top:370px;width:25px;text-align:center;font-size:13.4px;color:#2a2a2a">10</div><div class="a" style="left:32px;top:366px;width:466px;height:20px;background:#71bc8d"></div><div class="a" style="left:498px;top:366px;width:393px;height:20px;background:#a1cbf3"></div><div class="t" style="left:34px;top:370px;font-size:13.6px;color:#111">Коваль Л. П.</div><div class="t" style="left:376px;top:370px;width:122px;text-align:center;font-size:13.6px;letter-spacing:-0.5px;color:#111">1978</div><div class="t" style="left:498px;top:370px;width:161px;text-align:center;font-size:13.6px;color:#111">жен.</div><div class="t" style="left:659px;top:370px;width:192px;text-align:center;font-size:13.6px;color:#111">Вспомогательный персонал</div><div class="a" style="left:32px;top:385px;width:859px;height:1px;background:#1b3458"></div><div class="a" style="left:6px;top:386px;width:26px;height:20px;background:#ffd868;border-bottom:1px solid #d6a046;border-right:1px solid #d6a046"></div><div class="t" style="left:6px;top:390px;width:25px;text-align:center;font-size:13.4px;color:#2a2a2a">11</div><div class="a" style="left:32px;top:386px;width:466px;height:20px;background:#71bc8d"></div><div class="a" style="left:498px;top:386px;width:393px;height:20px;background:#b8ddfd"></div><div class="t" style="left:34px;top:390px;font-size:13.6px;color:#111">Парфенов Д. Ф.</div><div class="t" style="left:376px;top:390px;width:122px;text-align:center;font-size:13.6px;letter-spacing:-0.5px;color:#111">1969</div><div class="t" style="left:498px;top:390px;width:161px;text-align:center;font-size:13.6px;color:#111">муж.</div><div class="t" style="left:659px;top:390px;width:192px;text-align:center;font-size:13.6px;color:#111">Основной персонал</div><div class="a" style="left:32px;top:405px;width:859px;height:1px;background:#1b3458"></div><div class="a" style="left:6px;top:406px;width:26px;height:20px;background:#ffd868;border-bottom:1px solid #d6a046;border-right:1px solid #d6a046"></div><div class="t" style="left:6px;top:410px;width:25px;text-align:center;font-size:13.4px;color:#2a2a2a">12</div><div class="a" style="left:32px;top:406px;width:466px;height:20px;background:#71bc8d"></div><div class="a" style="left:498px;top:406px;width:393px;height:20px;background:#a1cbf3"></div><div class="t" style="left:34px;top:410px;font-size:13.6px;color:#111">Петров Ф. Л.</div><div class="t" style="left:376px;top:410px;width:122px;text-align:center;font-size:13.6px;letter-spacing:-0.5px;color:#111">1987</div><div class="t" style="left:498px;top:410px;width:161px;text-align:center;font-size:13.6px;color:#111">муж.</div><div class="t" style="left:659px;top:410px;width:192px;text-align:center;font-size:13.6px;color:#111">Основной персонал</div><div class="a" style="left:32px;top:425px;width:859px;height:1px;background:#1b3458"></div><div class="a" style="left:6px;top:426px;width:26px;height:20px;background:#ffd868;border-bottom:1px solid #d6a046;border-right:1px solid #d6a046"></div><div class="t" style="left:6px;top:430px;width:25px;text-align:center;font-size:13.4px;color:#2a2a2a">13</div><div class="a" style="left:32px;top:426px;width:466px;height:20px;background:#71bc8d"></div><div class="a" style="left:498px;top:426px;width:393px;height:20px;background:#b8ddfd"></div><div class="t" style="left:34px;top:430px;font-size:13.6px;color:#111">Попова М. Д.</div><div class="t" style="left:376px;top:430px;width:122px;text-align:center;font-size:13.6px;letter-spacing:-0.5px;color:#111">1981</div><div class="t" style="left:498px;top:430px;width:161px;text-align:center;font-size:13.6px;color:#111">жен.</div><div class="t" style="left:659px;top:430px;width:192px;text-align:center;font-size:13.6px;color:#111">Вспомогательный персонал</div><div class="a" style="left:32px;top:445px;width:859px;height:1px;background:#1b3458"></div><div class="a" style="left:6px;top:446px;width:26px;height:20px;background:#ffd868;border-bottom:1px solid #d6a046;border-right:1px solid #d6a046"></div><div class="t" style="left:6px;top:450px;width:25px;text-align:center;font-size:13.4px;color:#2a2a2a">14</div><div class="a" style="left:32px;top:446px;width:466px;height:20px;background:#71bc8d"></div><div class="a" style="left:498px;top:446px;width:393px;height:20px;background:#a1cbf3"></div><div class="t" style="left:34px;top:450px;font-size:13.6px;color:#111">Николаев А. Д.</div><div class="t" style="left:376px;top:450px;width:122px;text-align:center;font-size:13.6px;letter-spacing:-0.5px;color:#111">1985</div><div class="t" style="left:498px;top:450px;width:161px;text-align:center;font-size:13.6px;color:#111">муж.</div><div class="t" style="left:659px;top:450px;width:192px;text-align:center;font-size:13.6px;color:#111">Основной персонал</div><div class="a" style="left:32px;top:465px;width:859px;height:1px;background:#1b3458"></div><div class="a" style="left:6px;top:466px;width:26px;height:20px;background:#ffd868;border-bottom:1px solid #d6a046;border-right:1px solid #d6a046"></div><div class="t" style="left:6px;top:470px;width:25px;text-align:center;font-size:13.4px;color:#2a2a2a">15</div><div class="a" style="left:32px;top:466px;width:466px;height:20px;background:#71bc8d"></div><div class="a" style="left:498px;top:466px;width:393px;height:20px;background:#b8ddfd"></div><div class="t" style="left:34px;top:470px;font-size:13.6px;color:#111">Сафронова В. М.</div><div class="t" style="left:376px;top:470px;width:122px;text-align:center;font-size:13.6px;letter-spacing:-0.5px;color:#111">1973</div><div class="t" style="left:498px;top:470px;width:161px;text-align:center;font-size:13.6px;color:#111">жен.</div><div class="t" style="left:659px;top:470px;width:192px;text-align:center;font-size:13.6px;color:#111">Основной персонал</div><div class="a" style="left:32px;top:485px;width:859px;height:1px;background:#1b3458"></div><div class="a" style="left:6px;top:486px;width:26px;height:20px;background:#ffd868;border-bottom:1px solid #d6a046;border-right:1px solid #d6a046"></div><div class="t" style="left:6px;top:490px;width:25px;text-align:center;font-size:13.4px;color:#2a2a2a">16</div><div class="a" style="left:32px;top:486px;width:466px;height:20px;background:#71bc8d"></div><div class="a" style="left:498px;top:486px;width:393px;height:20px;background:#a1cbf3"></div><div class="t" style="left:34px;top:490px;font-size:13.6px;color:#111">Коваль Л. П.</div><div class="t" style="left:376px;top:490px;width:122px;text-align:center;font-size:13.6px;letter-spacing:-0.5px;color:#111">1978</div><div class="t" style="left:498px;top:490px;width:161px;text-align:center;font-size:13.6px;color:#111">жен.</div><div class="t" style="left:659px;top:490px;width:192px;text-align:center;font-size:13.6px;color:#111">Вспомогательный персонал</div><div class="a" style="left:32px;top:505px;width:859px;height:1px;background:#1b3458"></div><div class="a" style="left:6px;top:506px;width:26px;height:20px;background:#ffd868;border-bottom:1px solid #d6a046;border-right:1px solid #d6a046"></div><div class="t" style="left:6px;top:510px;width:25px;text-align:center;font-size:13.4px;color:#2a2a2a">17</div><div class="a" style="left:32px;top:506px;width:466px;height:20px;background:#71bc8d"></div><div class="a" style="left:498px;top:506px;width:393px;height:20px;background:#b8ddfd"></div><div class="t" style="left:34px;top:510px;font-size:13.6px;color:#111">Парфенов Д. Ф.</div><div class="t" style="left:376px;top:510px;width:122px;text-align:center;font-size:13.6px;letter-spacing:-0.5px;color:#111">1969</div><div class="t" style="left:498px;top:510px;width:161px;text-align:center;font-size:13.6px;color:#111">муж.</div><div class="t" style="left:659px;top:510px;width:192px;text-align:center;font-size:13.6px;color:#111">Основной персонал</div><div class="a" style="left:32px;top:525px;width:859px;height:1px;background:#1b3458"></div><div class="a" style="left:6px;top:526px;width:26px;height:20px;background:#ffd868;border-bottom:1px solid #d6a046;border-right:1px solid #d6a046"></div><div class="t" style="left:6px;top:530px;width:25px;text-align:center;font-size:13.4px;color:#2a2a2a">18</div><div class="a" style="left:32px;top:526px;width:466px;height:20px;background:#71bc8d"></div><div class="a" style="left:498px;top:526px;width:393px;height:20px;background:#a1cbf3"></div><div class="t" style="left:34px;top:530px;font-size:13.6px;color:#111">Петров Ф. Л.</div><div class="t" style="left:376px;top:530px;width:122px;text-align:center;font-size:13.6px;letter-spacing:-0.5px;color:#111">1987</div><div class="t" style="left:498px;top:530px;width:161px;text-align:center;font-size:13.6px;color:#111">муж.</div><div class="t" style="left:659px;top:530px;width:192px;text-align:center;font-size:13.6px;color:#111">Основной персонал</div><div class="a" style="left:32px;top:545px;width:859px;height:1px;background:#1b3458"></div><div class="a" style="left:6px;top:546px;width:26px;height:20px;background:#ffd868;border-bottom:1px solid #d6a046;border-right:1px solid #d6a046"></div><div class="t" style="left:6px;top:550px;width:25px;text-align:center;font-size:13.4px;color:#2a2a2a">19</div><div class="a" style="left:32px;top:546px;width:466px;height:20px;background:#71bc8d"></div><div class="a" style="left:498px;top:546px;width:393px;height:20px;background:#b8ddfd"></div><div class="t" style="left:34px;top:550px;font-size:13.6px;color:#111">Попова М. Д.</div><div class="t" style="left:376px;top:550px;width:122px;text-align:center;font-size:13.6px;letter-spacing:-0.5px;color:#111">1981</div><div class="t" style="left:498px;top:550px;width:161px;text-align:center;font-size:13.6px;color:#111">жен.</div><div class="t" style="left:659px;top:550px;width:192px;text-align:center;font-size:13.6px;color:#111">Вспомогательный персонал</div><div class="a" style="left:32px;top:565px;width:859px;height:1px;background:#1b3458"></div><div class="a" style="left:6px;top:566px;width:26px;height:20px;background:#ffd868;border-bottom:1px solid #d6a046;border-right:1px solid #d6a046"></div><div class="t" style="left:6px;top:570px;width:25px;text-align:center;font-size:13.4px;color:#2a2a2a">20</div><div class="a" style="left:32px;top:566px;width:466px;height:20px;background:#71bc8d"></div><div class="a" style="left:498px;top:566px;width:393px;height:20px;background:#a1cbf3"></div><div class="t" style="left:34px;top:570px;font-size:13.6px;color:#111">Николаев А. Д.</div><div class="t" style="left:376px;top:570px;width:122px;text-align:center;font-size:13.6px;letter-spacing:-0.5px;color:#111">1985</div><div class="t" style="left:498px;top:570px;width:161px;text-align:center;font-size:13.6px;color:#111">муж.</div><div class="t" style="left:659px;top:570px;width:192px;text-align:center;font-size:13.6px;color:#111">Основной персонал</div><div class="a" style="left:32px;top:585px;width:859px;height:1px;background:#1b3458"></div><div class="a" style="left:6px;top:586px;width:26px;height:20px;background:#ffd868;border-bottom:1px solid #d6a046;border-right:1px solid #d6a046"></div><div class="t" style="left:6px;top:590px;width:25px;text-align:center;font-size:13.4px;color:#2a2a2a">21</div><div class="a" style="left:32px;top:586px;width:466px;height:20px;background:#71bc8d"></div><div class="a" style="left:498px;top:586px;width:393px;height:20px;background:#b8ddfd"></div><div class="t" style="left:34px;top:590px;font-size:13.6px;color:#111">Сафронова В. М.</div><div class="t" style="left:376px;top:590px;width:122px;text-align:center;font-size:13.6px;letter-spacing:-0.5px;color:#111">1973</div><div class="t" style="left:498px;top:590px;width:161px;text-align:center;font-size:13.6px;color:#111">жен.</div><div class="t" style="left:659px;top:590px;width:192px;text-align:center;font-size:13.6px;color:#111">Основной персонал</div><div class="a" style="left:32px;top:605px;width:859px;height:1px;background:#1b3458"></div><div class="a" style="left:375px;top:186px;width:1px;height:416px;background:#1b3458"></div><div class="a" style="left:497px;top:186px;width:1px;height:416px;background:#1b3458"></div><div class="a" style="left:658px;top:186px;width:1px;height:416px;background:#1b3458"></div><div class="a" style="left:850px;top:186px;width:1px;height:416px;background:#1b3458"></div><div class="a" style="left:358px;top:187px;width:17px;height:17px;background:linear-gradient(#f5f6f8,#dee1e6);border:1px solid #b4b8c0"></div><svg style="left:362.5px;top:194px" width="8" height="4" viewBox="0 0 8 4"><path d="M0 0h8l-4 4z" fill="#555a60"/></svg><div class="a" style="left:481px;top:187px;width:17px;height:17px;background:linear-gradient(#f5f6f8,#dee1e6);border:1px solid #b4b8c0"></div><svg style="left:485.5px;top:194px" width="8" height="4" viewBox="0 0 8 4"><path d="M0 0h8l-4 4z" fill="#555a60"/></svg><div class="a" style="left:641px;top:187px;width:17px;height:17px;background:linear-gradient(#f5f6f8,#dee1e6);border:1px solid #b4b8c0"></div><svg style="left:645.5px;top:194px" width="8" height="4" viewBox="0 0 8 4"><path d="M0 0h8l-4 4z" fill="#555a60"/></svg><div class="a" style="left:833px;top:187px;width:17px;height:17px;background:linear-gradient(#f5f6f8,#dee1e6);border:1px solid #b4b8c0"></div><svg style="left:837.5px;top:194px" width="8" height="4" viewBox="0 0 8 4"><path d="M0 0h8l-4 4z" fill="#555a60"/></svg><div class="a" style="left:891px;top:166px;width:16px;height:436px;background:linear-gradient(90deg,#dadde2,#e6e9ed)"></div><div class="a" style="left:893px;top:168px;width:13px;height:6px;background:#fff;border:1px solid #9aa3ae"></div><div class="a" style="left:896px;top:170px;width:7px;height:1px;background:#777"></div><svg style="left:894px;top:179px" width="10" height="6" viewBox="0 0 10 6"><path d="M0 6 L5 0 L10 6z" fill="#444"/></svg><div class="a" style="left:891px;top:191px;width:15px;height:187px;background:linear-gradient(90deg,#f4f5f7,#e4e7eb);border:1px solid #8f959d;border-radius:2px"></div><svg style="left:895px;top:281px" width="7" height="5" viewBox="0 0 7 5"><path d="M0 0.5h7M0 2.5h7M0 4.5h7" stroke="#8a9098" stroke-width="1"/></svg><div class="a" style="left:905px;top:166px;width:1px;height:436px;background:#a0a8b2"></div><svg style="left:894px;top:592px" width="10" height="6" viewBox="0 0 10 6"><path d="M0 0 L5 6 L10 0z" fill="#444"/></svg><div class="a" style="left:6px;top:602px;width:901px;height:15px;background:linear-gradient(#e9edf2,#dfe4ea)"></div><div class="a" style="left:6px;top:602px;width:901px;height:1px;background:#a9b1bc"></div><svg style="left:12px;top:606px" width="7" height="7" viewBox="0 0 7 7"><rect x="0" y="0" width="1.5" height="7" fill="#333"/><path d="M7 0 L2 3.5 L7 7z" fill="#333"/></svg><svg style="left:28px;top:606px" width="5" height="7" viewBox="0 0 5 7"><path d="M5 0 L0 3.5 L5 7z" fill="#333"/></svg><svg style="left:42px;top:606px" width="5" height="7" viewBox="0 0 5 7"><path d="M0 0 L5 3.5 L0 7z" fill="#333"/></svg><svg style="left:56px;top:606px" width="7" height="7" viewBox="0 0 7 7"><path d="M0 0 L5 3.5 L0 7z" fill="#333"/><rect x="5.5" y="0" width="1.5" height="7" fill="#333"/></svg><div class="a" style="left:68px;top:602px;width:1px;height:16px;background:#b9c0c9"></div><svg style="left:0;top:0" width="912" height="648" viewBox="0 0 912 648"><polygon points="413,602 476,602 463,617 410,617" fill="#ffffff"/><path d="M90 603 L77 616.5" stroke="#8f98a4" stroke-width="1" fill="none"/><path d="M78 617 L82 613 L83 617z" fill="#f4f6f8"/><path d="M143 603 L130 616.5" stroke="#8f98a4" stroke-width="1" fill="none"/><path d="M131 617 L135 613 L136 617z" fill="#f4f6f8"/><path d="M195.6 603 L182.6 616.5" stroke="#8f98a4" stroke-width="1" fill="none"/><path d="M183.6 617 L187.6 613 L188.6 617z" fill="#f4f6f8"/><path d="M249.7 603 L236.7 616.5" stroke="#8f98a4" stroke-width="1" fill="none"/><path d="M237.7 617 L241.7 613 L242.7 617z" fill="#f4f6f8"/><path d="M302.5 603 L289.5 616.5" stroke="#8f98a4" stroke-width="1" fill="none"/><path d="M290.5 617 L294.5 613 L295.5 617z" fill="#f4f6f8"/><path d="M363 603 L350 616.5" stroke="#8f98a4" stroke-width="1" fill="none"/><path d="M351 617 L355 613 L356 617z" fill="#f4f6f8"/><path d="M475.5 603 L462.5 616.5" stroke="#8f98a4" stroke-width="1" fill="none"/><path d="M463.5 617 L467.5 613 L468.5 617z" fill="#f4f6f8"/><path d="M529.7 603 L516.7 616.5" stroke="#8f98a4" stroke-width="1" fill="none"/><path d="M517.7 617 L521.7 613 L522.7 617z" fill="#f4f6f8"/></svg><div class="t" style="left:88.5px;top:605px;font-size:12.2px;color:#4a4a4a;overflow:hidden;width:60px">Лист7</div><div class="t" style="left:142px;top:605px;font-size:12.2px;color:#4a4a4a;overflow:hidden;width:60px">Лист5</div><div class="t" style="left:194.8px;top:605px;font-size:12.2px;color:#4a4a4a;overflow:hidden;width:60px">Лист8</div><div class="t" style="left:248px;top:605px;font-size:12.2px;color:#4a4a4a;overflow:hidden;width:60px">Лист9</div><div class="t" style="left:301.7px;top:605px;font-size:12.2px;color:#4a4a4a;overflow:hidden;width:60px">Лист10</div><div class="t" style="left:362.8px;top:605px;font-size:12.2px;color:#4a4a4a;overflow:hidden;width:60px">Лист11</div><div class="t" style="left:422.6px;top:605px;font-size:12.2px;color:#1a1a1a;font-weight:bold">Лист1</div><div class="t" style="left:476.2px;top:605px;font-size:12.2px;color:#4a4a4a;overflow:hidden;width:60px">Лист2</div><div class="t" style="left:529.5px;top:605px;font-size:12.2px;color:#4a4a4a;overflow:hidden;width:12px">Л</div><div class="a" style="left:536px;top:603px;width:9px;height:14px;background:#fff;border:1px solid #8d96a2"></div><svg style="left:550px;top:606px" width="5" height="9" viewBox="0 0 5 9"><path d="M5 0 L0 4.5 L5 9z" fill="#333"/></svg><div class="a" style="left:564px;top:603px;width:210px;height:14px;background:linear-gradient(#f4f5f7,#e3e6ea);border:1px solid #b9bec6;border-radius:2px"></div><svg style="left:664px;top:606px" width="6" height="8" viewBox="0 0 6 8"><path d="M0.5 0v8M2.5 0v8M4.5 0v8" stroke="#8a9098" stroke-width="1"/></svg><svg style="left:872px;top:606px" width="5" height="9" viewBox="0 0 5 9"><path d="M0 0 L5 4.5 L0 9z" fill="#333"/></svg><div class="a" style="left:883px;top:603px;width:8px;height:14px;background:#fff;border:1px solid #8d96a2"></div><div class="a" style="left:6px;top:617px;width:901px;height:2px;background:#979ea8"></div><div class="a" style="left:6px;top:619px;width:901px;height:21px;background:linear-gradient(#f0f2f5 0%,#e4e7ec 50%,#d5d9df 100%)"></div><div class="a" style="left:6px;top:640px;width:901px;height:1px;background:#7f8893"></div><div class="t" style="left:14px;top:623px;font-size:11.6px;color:#333;">Готово</div><div class="a" style="left:67px;top:620px;width:1px;height:19px;background:#c2c8d0"></div><svg style="left:78px;top:621px" width="15" height="14" viewBox="0 0 15 14"><rect x="1.5" y="2.5" width="13" height="11" fill="#fff" stroke="#4a6fb0"/><rect x="1.5" y="2.5" width="13" height="3" fill="#4a6fb0"/><path d="M4 8h9M4 10.5h9" stroke="#6a8ac8"/><circle cx="3" cy="3" r="2.5" fill="#e04030"/></svg><div class="a" style="left:103px;top:620px;width:1px;height:19px;background:#c2c8d0"></div><div class="t" style="left:327px;top:623px;font-size:10.8px;color:#333;">Среднее: 20950,64815</div><div class="t" style="left:456px;top:623px;font-size:11.2px;color:#333;">Количество: 222</div><div class="t" style="left:559px;top:623px;font-size:10.7px;color:#333;">Сумма: 2262670</div><div class="a" style="left:650px;top:620px;width:1px;height:19px;background:#c2c8d0"></div><div class="a" style="left:654px;top:620px;width:20px;height:19px;background:linear-gradient(#fde9a8,#f9d46a);border:1px solid #d9a642;border-radius:2px"></div><svg style="left:658px;top:623px" width="12" height="12" viewBox="0 0 12 12"><rect x="0.5" y="0.5" width="11" height="11" fill="#fff" stroke="#555"/><path d="M0.5 4h11M0.5 7.5h11M4 0.5v11M7.5 0.5v11" stroke="#555"/></svg><svg style="left:677px;top:623px" width="12" height="12" viewBox="0 0 12 12"><rect x="0.5" y="0.5" width="11" height="11" fill="#fff" stroke="#555"/><rect x="2.5" y="2.5" width="7" height="7" fill="#fff" stroke="#777"/></svg><svg style="left:695px;top:623px" width="13" height="12" viewBox="0 0 13 12"><rect x="0.5" y="0.5" width="12" height="11" fill="#fff" stroke="#555"/><rect x="2" y="2" width="4" height="8" fill="#777"/><rect x="7.5" y="2" width="3.5" height="5" fill="#999"/></svg><div class="t" style="left:720px;top:623px;font-size:10.8px;color:#333;">100%</div><svg style="left:755px;top:621px" width="16" height="16" viewBox="0 0 16 16"><circle cx="8" cy="8" r="7" fill="#f4f5f7" stroke="#555"/><path d="M4.5 8h7" stroke="#333" stroke-width="1.8"/></svg><div class="a" style="left:772px;top:628px;width:100px;height:1px;background:#9aa0a8"></div><div class="a" style="left:772px;top:629px;width:100px;height:1px;background:#fff"></div><svg style="left:817px;top:623px" width="9" height="12" viewBox="0 0 9 12"><path d="M0.5 0.5h8v8l-4 4-4-4z" fill="#f4f5f7" stroke="#555"/></svg><svg style="left:872px;top:621px" width="16" height="16" viewBox="0 0 16 16"><circle cx="8" cy="8" r="7" fill="#f4f5f7" stroke="#555"/><path d="M4.5 8h7M8 4.5v7" stroke="#333" stroke-width="1.8"/></svg><svg style="left:896px;top:630px" width="10" height="10" viewBox="0 0 10 10"><g fill="#a0a6ae"><rect x="7" y="1" width="2" height="2"/><rect x="4" y="4" width="2" height="2"/><rect x="7" y="4" width="2" height="2"/><rect x="1" y="7" width="2" height="2"/><rect x="4" y="7" width="2" height="2"/><rect x="7" y="7" width="2" height="2"/></g></svg><div class="a" style="left:5px;top:50px;width:1px;height:591px;background:#5f6d7c"></div><div class="a" style="left:4px;top:50px;width:1px;height:591px;background:#dbecfb"></div><div class="a" style="left:907px;top:50px;width:1px;height:591px;background:#5f6d7c"></div><div class="a" style="left:908px;top:50px;width:1px;height:591px;background:#dbecfb"></div><div class="a" style="left:32px;top:206px;width:1px;height:20px;background:#7030a0"></div><div class="a" style="left:32px;top:226px;width:1px;height:20px;background:#7030a0"></div><div class="a" style="left:32px;top:246px;width:1px;height:20px;background:#7030a0"></div><div class="a" style="left:32px;top:266px;width:1px;height:20px;background:#7030a0"></div><div class="a" style="left:32px;top:286px;width:1px;height:20px;background:#7030a0"></div><div class="a" style="left:32px;top:306px;width:1px;height:20px;background:#7030a0"></div><div class="a" style="left:32px;top:326px;width:1px;height:20px;background:#7030a0"></div><div class="a" style="left:32px;top:346px;width:1px;height:20px;background:#7030a0"></div><div class="a" style="left:32px;top:366px;width:1px;height:20px;background:#7030a0"></div><div class="a" style="left:32px;top:386px;width:1px;height:20px;background:#7030a0"></div><div class="a" style="left:32px;top:406px;width:1px;height:20px;background:#7030a0"></div><div class="a" style="left:32px;top:426px;width:1px;height:20px;background:#7030a0"></div><div class="a" style="left:32px;top:446px;width:1px;height:20px;background:#7030a0"></div><div class="a" style="left:32px;top:466px;width:1px;height:20px;background:#7030a0"></div><div class="a" style="left:32px;top:486px;width:1px;height:20px;background:#7030a0"></div><div class="a" style="left:32px;top:506px;width:1px;height:20px;background:#7030a0"></div><div class="a" style="left:32px;top:526px;width:1px;height:20px;background:#7030a0"></div><div class="a" style="left:32px;top:546px;width:1px;height:20px;background:#7030a0"></div><div class="a" style="left:32px;top:566px;width:1px;height:20px;background:#7030a0"></div><div class="a" style="left:32px;top:586px;width:1px;height:16px;background:#7030a0"></div><div class="a" style="left:32px;top:186px;width:1px;height:19px;background:#9fb3a8"></div><div class="a" style="left:32px;top:186px;width:344px;height:1px;background:#9fb3a8"></div><div class="a" style="left:0px;top:641px;width:912px;height:6px;background:#b8d4f3"></div><div class="a" style="left:0px;top:646px;width:912px;height:1px;background:#e6f0fa"></div><div class="a" style="left:0px;top:647px;width:912px;height:1px;background:#2a3440"></div><div class="a" style="left:105px;top:204px;width:269px;height:388px;background:#fff;border:1px solid #b4b8c0;box-shadow:1px 1px 2px rgba(0,0,0,0.2)"></div><div class="a" style="left:106px;top:581px;width:267px;height:10px;background:linear-gradient(#f6f7f9,#e6e9ee);border-top:1px solid #e2e5ea"></div><div class="a" style="left:130px;top:205px;width:1px;height:376px;background:#e2e3e4"></div><svg style="left:111px;top:208px" width="16" height="17" viewBox="0 0 16 17"><text x="0" y="7" font-family="Liberation Serif" font-weight="bold" font-size="8.5" fill="#2a4c9a">A</text><text x="0" y="15" font-family="Liberation Serif" font-weight="bold" font-size="8.5" fill="#9a5040">Я</text><path d="M12.5 1v13M10 11.5l2.5 3 2.5-3" stroke="#111" fill="none" stroke-width="1.1"/></svg><svg style="left:111px;top:230px" width="16" height="17" viewBox="0 0 16 17"><text x="0" y="7" font-family="Liberation Serif" font-weight="bold" font-size="8.5" fill="#9a5040">Я</text><text x="0" y="15" font-family="Liberation Serif" font-weight="bold" font-size="8.5" fill="#2a4c9a">A</text><path d="M12.5 1v13M10 11.5l2.5 3 2.5-3" stroke="#111" fill="none" stroke-width="1.1"/></svg><div class="t" style="left:139px;top:211px;font-size:11.4px;color:#1e1e1e;">Сортировка от <u>А</u> до Я</div><div class="t" style="left:139px;top:233px;font-size:11.4px;color:#1e1e1e;">Сортировка от <u>Я</u> до А</div><div class="t" style="left:139px;top:255px;font-size:11.4px;color:#1e1e1e;"><u>С</u>ортировка по цвету</div><svg style="left:361px;top:256px" width="4" height="7" viewBox="0 0 4 7"><path d="M0 0 L4 3.5 L0 7z" fill="#888"/></svg><div class="a" style="left:138px;top:272px;width:234px;height:0;border-top:1px dashed #c4c6c8"></div><svg style="left:111px;top:280px" width="15" height="13" viewBox="0 0 15 13"><path d="M0.5 0.5 L11 0.5 L7 4.5 L7 9 L4.5 10 L4.5 4.5 Z" fill="#dcdfe2" stroke="#9a9ea4" stroke-width="0.9"/><path d="M8.5 3.5 L13.5 11 M13.5 3.5 L7 11.5" stroke="#8e9298" stroke-width="1.5"/></svg><div class="t" style="left:139px;top:281px;font-size:11.4px;color:#a2a4a8;"><u>У</u>далить фильтр с "Имя"</div><div class="t" style="left:139px;top:303px;font-size:11.4px;color:#a2a4a8;"><u>Ф</u>ильтр по цвету</div><svg style="left:361px;top:304px" width="4" height="7" viewBox="0 0 4 7"><path d="M0 0 L4 3.5 L0 7z" fill="#b4b6b8"/></svg><div class="t" style="left:139px;top:325px;font-size:11.4px;color:#1e1e1e;">Текстовые <u>ф</u>ильтры</div><svg style="left:361px;top:326px" width="4" height="7" viewBox="0 0 4 7"><path d="M0 0 L4 3.5 L0 7z" fill="#888"/></svg><div class="a" style="left:138px;top:341px;width:234px;height:1px;background:#e2e3e4"></div><div class="a" style="left:138px;top:347px;width:230px;height:21px;background:#fff;border:1px solid #a5acb5"></div><div class="t" style="left:141px;top:351px;font-size:11.6px;color:#8a8d91;">Поиск</div><svg style="left:351px;top:350px" width="14" height="14" viewBox="0 0 14 14"><circle cx="8.5" cy="5.5" r="4" fill="none" stroke="#3a72c4" stroke-width="1.8"/><path d="M6 8 L1.5 12.5" stroke="#3a72c4" stroke-width="2.2"/></svg><div class="a" style="left:138px;top:371px;width:230px;height:169px;background:#fff;border:1px solid #dcdfe3"></div><div class="a" style="left:161px;top:374px;width:11px;height:11px;background:#fff;border:1px solid #6a6e74"></div><svg style="left:162px;top:375px" width="9" height="9" viewBox="0 0 9 9"><path d="M1.5 4.5 L3.7 7 L8 1.5" fill="none" stroke="#111" stroke-width="1.7"/></svg><div class="t" style="left:175px;top:375px;font-size:10.8px;color:#111;">(Выделить все)</div><div class="a" style="left:161px;top:390px;width:11px;height:11px;background:#fff;border:1px solid #6a6e74"></div><svg style="left:162px;top:391px" width="9" height="9" viewBox="0 0 9 9"><path d="M1.5 4.5 L3.7 7 L8 1.5" fill="none" stroke="#111" stroke-width="1.7"/></svg><div class="t" style="left:175px;top:391px;font-size:10.8px;color:#111;">Коваль Л. П.</div><div class="a" style="left:161px;top:406px;width:11px;height:11px;background:#fff;border:1px solid #6a6e74"></div><svg style="left:162px;top:407px" width="9" height="9" viewBox="0 0 9 9"><path d="M1.5 4.5 L3.7 7 L8 1.5" fill="none" stroke="#111" stroke-width="1.7"/></svg><div class="t" style="left:175px;top:407px;font-size:10.8px;color:#111;">Николаев А. Д.</div><div class="a" style="left:161px;top:422px;width:11px;height:11px;background:#fff;border:1px solid #6a6e74"></div><svg style="left:162px;top:423px" width="9" height="9" viewBox="0 0 9 9"><path d="M1.5 4.5 L3.7 7 L8 1.5" fill="none" stroke="#111" stroke-width="1.7"/></svg><div class="t" style="left:175px;top:423px;font-size:10.8px;color:#111;">Парфенов Д. Ф.</div><div class="a" style="left:161px;top:438px;width:11px;height:11px;background:#fff;border:1px solid #6a6e74"></div><svg style="left:162px;top:439px" width="9" height="9" viewBox="0 0 9 9"><path d="M1.5 4.5 L3.7 7 L8 1.5" fill="none" stroke="#111" stroke-width="1.7"/></svg><div class="t" style="left:175px;top:439px;font-size:10.8px;color:#111;">Петров Ф. Л.</div><div class="a" style="left:161px;top:454px;width:11px;height:11px;background:#fff;border:1px solid #6a6e74"></div><svg style="left:162px;top:455px" width="9" height="9" viewBox="0 0 9 9"><path d="M1.5 4.5 L3.7 7 L8 1.5" fill="none" stroke="#111" stroke-width="1.7"/></svg><div class="t" style="left:175px;top:455px;font-size:10.8px;color:#111;">Попова М. Д.</div><div class="a" style="left:161px;top:470px;width:11px;height:11px;background:#fff;border:1px solid #6a6e74"></div><svg style="left:162px;top:471px" width="9" height="9" viewBox="0 0 9 9"><path d="M1.5 4.5 L3.7 7 L8 1.5" fill="none" stroke="#111" stroke-width="1.7"/></svg><div class="t" style="left:175px;top:471px;font-size:10.8px;color:#111;">Сафронова В. М.</div><div class="a" style="left:151px;top:379px;width:0;height:97px;border-left:1px dotted #8a8d91"></div><div class="a" style="left:151px;top:379px;width:10px;height:0;border-top:1px dotted #8a8d91"></div><div class="a" style="left:151px;top:395px;width:10px;height:0;border-top:1px dotted #8a8d91"></div><div class="a" style="left:151px;top:411px;width:10px;height:0;border-top:1px dotted #8a8d91"></div><div class="a" style="left:151px;top:427px;width:10px;height:0;border-top:1px dotted #8a8d91"></div><div class="a" style="left:151px;top:443px;width:10px;height:0;border-top:1px dotted #8a8d91"></div><div class="a" style="left:151px;top:459px;width:10px;height:0;border-top:1px dotted #8a8d91"></div><div class="a" style="left:151px;top:475px;width:10px;height:0;border-top:1px dotted #8a8d91"></div><div class="a" style="left:210px;top:555px;width:73px;height:21px;border:1px solid #3c7fb1;border-radius:3px;background:linear-gradient(#f2f8fd 0%,#e4f1fb 45%,#cfe6f8 50%,#bcdcf4 100%);box-shadow:inset 0 0 0 1px #b9e3fb"></div><div class="t" style="left:210px;top:560px;width:73px;text-align:center;font-size:11.6px;color:#111">ОК</div><div class="a" style="left:294px;top:555px;width:73px;height:21px;border:1px solid #707070;border-radius:3px;background:linear-gradient(#f2f2f2 0%,#ebebeb 45%,#dddddd 50%,#cfcfcf 100%);box-shadow:inset 0 0 0 1px #fcfcfc"></div><div class="t" style="left:294px;top:560px;width:73px;text-align:center;font-size:11.6px;color:#111">Отмена</div><svg style="left:364px;top:584px" width="8" height="7" viewBox="0 0 8 7"><g fill="#b4b8be"><rect x="6" y="0" width="2" height="2"/><rect x="3" y="3" width="2" height="2"/><rect x="6" y="3" width="2" height="2"/><rect x="0" y="5" width="2" height="2"/><rect x="3" y="5" width="2" height="2"/><rect x="6" y="5" width="2" height="2"/></g></svg><svg style="left:0;top:0" width="912" height="648" viewBox="0 0 912 648"><path d="M127.5 204.7 L366.6 204.7 Q376.6 204.7 376.6 214.7 L376.6 572.4 Q376.6 585.4 363.6 585.4 L121.5 585.4 Q107.5 585.4 107.5 571.4 L107.5 224.7 Q107.5 204.7 127.5 204.7Z" fill="none" stroke="#e61c24" stroke-width="4.8"/><path d="M361.6 179.5 L373.3 179.5 Q381.3 179.5 381.3 187.5 L381.3 198 Q381.3 206 373.3 206 L361.6 206 Q353.6 206 353.6 198 L353.6 187.5 Q353.6 179.5 361.6 179.5Z" fill="none" stroke="#e61c24" stroke-width="5"/></svg></body></html>
